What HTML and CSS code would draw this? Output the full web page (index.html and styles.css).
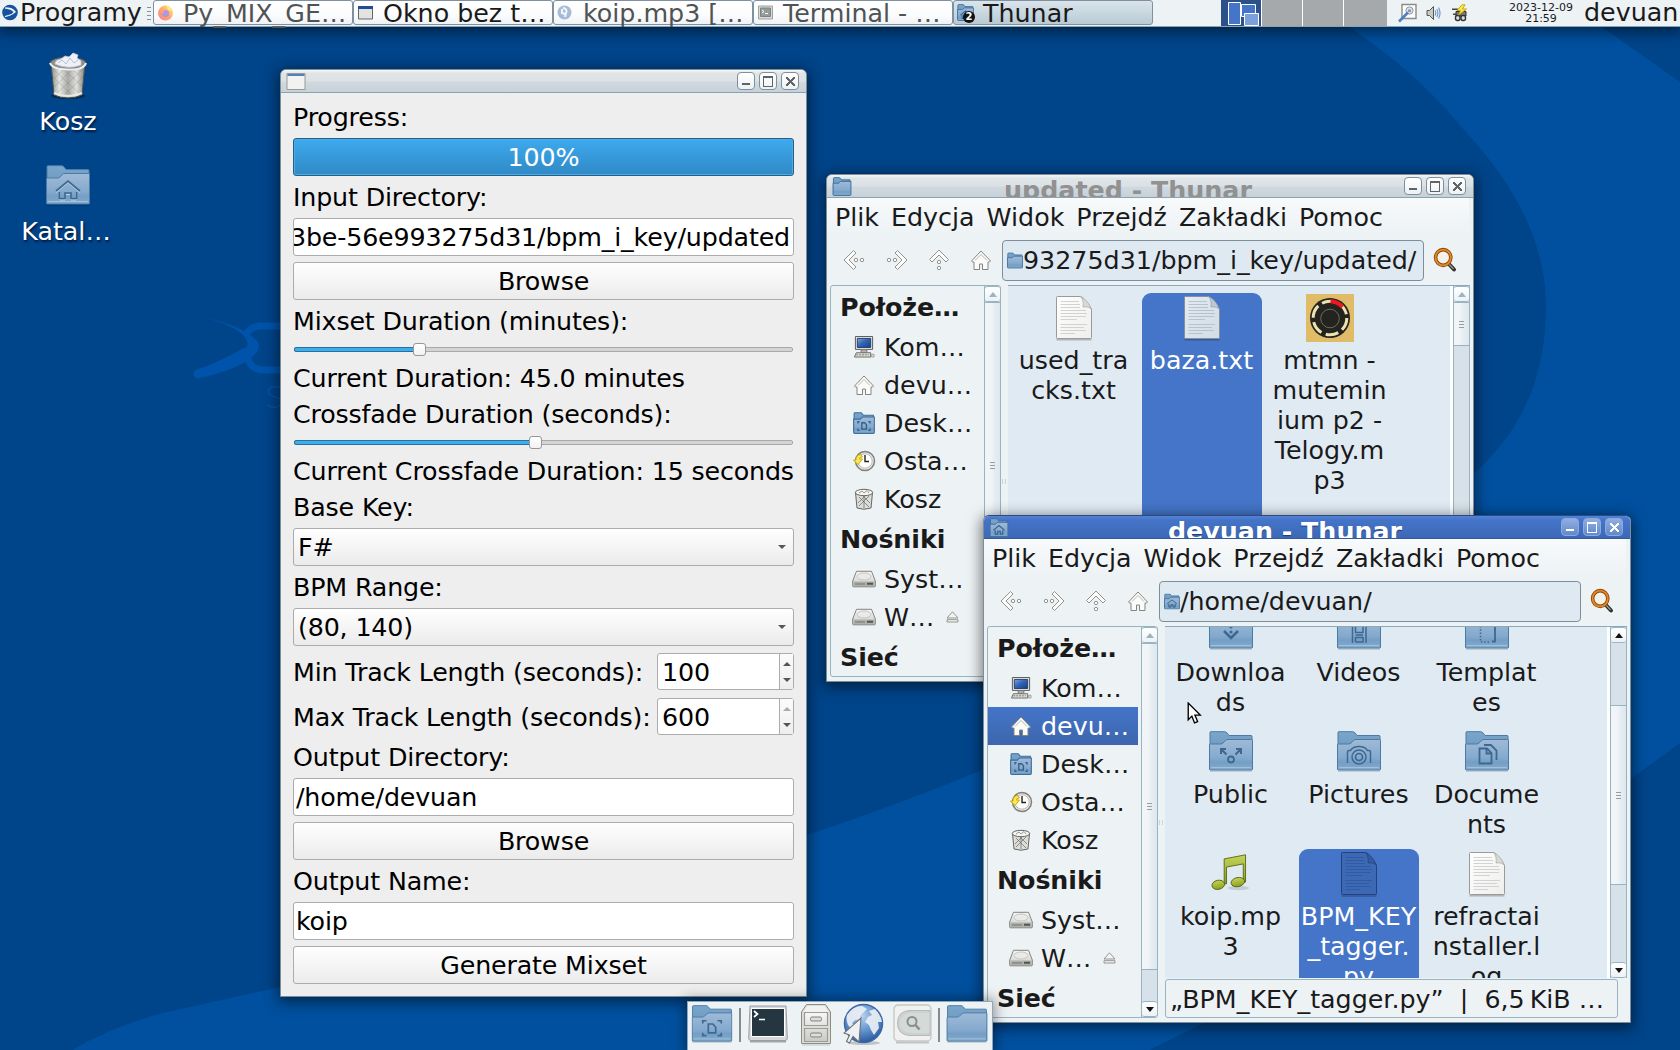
FILE: index.html
```html
<!DOCTYPE html>
<html lang="pl">
<head>
<meta charset="utf-8">
<title>devuan</title>
<link rel="stylesheet" href="styles.css">
</head>
<body>
<svg class="defs" width="0" height="0">
  <defs>
    <linearGradient id="gFront" x1="0" y1="0" x2="0" y2="1"><stop offset="0" stop-color="#a0bad7"/><stop offset=".6" stop-color="#84aace"/><stop offset=".75" stop-color="#759ec5"/><stop offset="1" stop-color="#83acd0"/></linearGradient>
    <linearGradient id="gBack" x1="0" y1="0" x2="0" y2="1"><stop offset="0" stop-color="#7ba6cb"/><stop offset="1" stop-color="#5c8db8"/></linearGradient>
    <linearGradient id="gPaper" x1="0" y1="0" x2="1" y2="1"><stop offset="0" stop-color="#fff"/><stop offset="1" stop-color="#eeeeec"/></linearGradient>
    <linearGradient id="gMetal" x1="0" y1="0" x2="1" y2="0"><stop offset="0" stop-color="#8b8b87"/><stop offset=".25" stop-color="#e6e6e3"/><stop offset=".5" stop-color="#a9aaa6"/><stop offset=".75" stop-color="#e0e0dd"/><stop offset="1" stop-color="#82827e"/></linearGradient>
    <linearGradient id="gGrey" x1="0" y1="0" x2="0" y2="1"><stop offset="0" stop-color="#f8f8f7"/><stop offset="1" stop-color="#c9cac6"/></linearGradient>
    <linearGradient id="gNote" x1="0" y1="0" x2="0" y2="1"><stop offset="0" stop-color="#c5d35c"/><stop offset="1" stop-color="#8aa01f"/></linearGradient>
    <linearGradient id="gScreen" x1="0" y1="0" x2="1" y2="1"><stop offset="0" stop-color="#7fa6e0"/><stop offset=".45" stop-color="#3465b4"/><stop offset="1" stop-color="#163f86"/></linearGradient>
    <radialGradient id="gGlobe" cx=".45" cy=".3" r=".7"><stop offset="0" stop-color="#b9d3f0"/><stop offset=".6" stop-color="#5e8fc9"/><stop offset="1" stop-color="#2d5b9e"/></radialGradient>
    <linearGradient id="gFox" x1="1" y1="0" x2="0" y2="1"><stop offset="0" stop-color="#fff06a"/><stop offset=".5" stop-color="#ffa05a"/><stop offset="1" stop-color="#ff6c8c"/></linearGradient>
  </defs>
  <symbol id="folder" viewBox="0 0 44 41">
    <path d="M1 38V1.500Q1 .7 2 .7H15.500Q17 .7 18 2L20 4.500H42Q43 4.500 43 5.500V38z" fill="url(#gBack)" stroke="#4a7aa5"/>
    <path d="M.5 14Q.5 13 1.500 13H11.500Q13 13 14 12L16.500 9.500Q17.500 8.500 19 8.500H42.500Q43.500 8.500 43.500 9.500V38Q43.500 39 42.500 39H1.500Q.5 39 .5 38z" fill="url(#gFront)" stroke="#4a7aa5"/>
    <path d="M2 36.500H42" stroke="#a9c6e0" stroke-width=".8"/>
    <path d="M1 40.200H43" stroke="#00000030"/>
  </symbol>
  <symbol id="folder-home" viewBox="0 0 44 41"><use href="#folder"/>
    <path d="M10 26.500L22 16.500L34 26.500M14 26.500V34H19V28.500H25V34H30V26.500" fill="none" stroke="#c4d8ea" transform="translate(0 1)"/>
    <path d="M10 26L22 16L34 26M13.500 27V33.500H19V28H25V33.500H30.500V27" fill="none" stroke="#3e6890" stroke-width="1.700"/>
  </symbol>
  <symbol id="folder-small" viewBox="0 0 20 20">
    <path d="M1 18V1.500Q1 .7 1.800 .7H7.500L9.500 3H18.500V18z" fill="url(#gBack)" stroke="#3e6f9c"/>
    <path d="M.6 18.500V6.500H6.500L8.500 4.600H19.400V18.500Q19.400 19.400 18.500 19.400H1.500Q.6 19.400 .6 18.500z" fill="url(#gFront)" stroke="#3e6f9c"/>
  </symbol>
  <symbol id="folder-small-home" viewBox="0 0 20 20"><use href="#folder-small"/>
    <path d="M4 13L10 8L16 13M6 13V17H8.700V14H11.300V17H14V13" fill="none" stroke="#355f88" stroke-width="1.200"/>
  </symbol>
  <symbol id="folder-small-desk" viewBox="0 0 20 20"><use href="#folder-small"/>
    <path d="M4.500 10.500V8.800H6M14 8.800H15.500V10.500M4.500 15V16.700H6M14 16.700H15.500V15M8 9.800H10.500L12.200 11.500V15.500H8z" fill="none" stroke="#355f88" stroke-width="1.200"/>
  </symbol>
  <symbol id="folder-desk" viewBox="0 0 44 41"><use href="#folder"/>
    <path d="M12 20V17H16M28 17H32V20M12 30V33H16M28 33H32V30M18 20.500H23L26 24V30H18z" fill="none" stroke="#3e6890" stroke-width="1.800"/>
  </symbol>
  <symbol id="folder-down" viewBox="0 0 44 41"><use href="#folder"/>
    <path d="M15 22L22 29L29 22" fill="none" stroke="#3e6890" stroke-width="2.600"/><circle cx="22" cy="23" r="1.600" fill="#3e6890"/><circle cx="22" cy="18" r="1.600" fill="#3e6890"/>
  </symbol>
  <symbol id="folder-video" viewBox="0 0 44 41"><use href="#folder"/>
    <path d="M15.500 14V34M29 14V34M18.500 14V23.500H26V14M18.500 33V28.500H26V33H18.500M18.500 26H26" fill="none" stroke="#3e6890" stroke-width="1.500"/>
  </symbol>
  <symbol id="folder-tmpl" viewBox="0 0 44 41"><use href="#folder"/>
    <path d="M27 16H30V32.500H27" fill="none" stroke="#3e6890" stroke-width="1.800"/><path d="M24 33H15.500V14" fill="none" stroke="#3e6890" stroke-width="1.500" stroke-dasharray="1.500 1.800"/>
  </symbol>
  <symbol id="folder-public" viewBox="0 0 44 41"><use href="#folder"/>
    <path d="M17.500 23.500L12.500 18.500M12 23V18H17M26.500 23.500L31.500 18.500M27 18H32V23" fill="none" stroke="#3e6890" stroke-width="2"/><circle cx="22" cy="28.500" r="3" fill="none" stroke="#3e6890" stroke-width="1.800"/>
  </symbol>
  <symbol id="folder-pic" viewBox="0 0 44 41"><use href="#folder"/>
    <path d="M10.500 32V21Q10.500 19.500 12 19.500H13.500Q16 15.500 22 15.500T30.500 19.500H32Q33.500 19.500 33.500 21V32" fill="none" stroke="#3e6890" stroke-width="1.500"/><circle cx="22" cy="26" r="7" fill="none" stroke="#3e6890" stroke-width="1.500"/><circle cx="22" cy="26" r="3.500" fill="none" stroke="#3e6890" stroke-width="1.700"/>
  </symbol>
  <symbol id="folder-doc" viewBox="0 0 44 41"><use href="#folder"/>
    <path d="M14.500 17.500H22L26.500 22V32.500H14.500zM21.500 17.500V22.500H26.500M19 14H26L31.500 19.500V29" fill="none" stroke="#3e6890" stroke-width="1.800"/>
  </symbol>
  <symbol id="doc" viewBox="0 0 38 46">
    <path d="M1.500 44.500H36.500" stroke="#00000038" stroke-width="2"/>
    <path d="M2.500 1.500H25.500Q31 4 36.500 14.500V42.500Q36.500 43.500 35.500 43.500H2.500Q1.500 43.500 1.500 42.500V2.500Q1.500 1.500 2.500 1.500z" fill="url(#gPaper)" stroke="#9a9b97"/>
    <path d="M25.500 1.500Q29 5 28 12Q34 11 36.500 14.500Q33 5 25.500 1.500z" fill="#d9dad6" stroke="#a5a6a2" stroke-width=".7"/>
    <path d="M5.500 6.500H24M5.500 9.500H25M5.500 12.500H25M5.500 15.500H31M5.500 18.500H32M5.500 21.500H31M5.500 24.500H22M5.500 29.500H32M5.500 32.500H29M5.500 35.500H31M5.500 38.500H20" stroke="#d2d2d2"/>
  </symbol>
  <symbol id="house" viewBox="0 0 22 22">
    <path d="M1.500 12L11 2L20.500 12L19.500 13H18V20.500H12.500V15H9.500V20.500H4V13H2.500z" fill="#fbfbfa" stroke="#85857f"/>
    <path d="M5 11.500L11 5.500L17 11.500" fill="none" stroke="#a5a5a0" stroke-width=".8"/>
  </symbol>
  <symbol id="back" viewBox="0 0 22 22">
    <path d="M10.500 1.500L13 4L6 11L13 18L10.500 20.500L1 11z" fill="#fcfcfb" stroke="#93938e"/><circle cx="13" cy="11" r="1.700" fill="#fff" stroke="#93938e"/><circle cx="19" cy="11" r="1.700" fill="#fff" stroke="#93938e"/>
  </symbol>
  <symbol id="computer" viewBox="0 0 22 23">
    <path d="M2 .5H20V14H2z" fill="#e9e9e6" stroke="#55574f"/><path d="M4 2.500H18V12H4z" fill="url(#gScreen)" stroke="#203d70"/><path d="M8 14.500H14V17H8z" fill="#c5c6c2" stroke="#777"/><path d="M3 17.500H18V22H1z" fill="#deded9" stroke="#6b6c67"/><path d="M3 19.700H16" stroke="#777" stroke-dasharray="2 1"/><path d="M19 19H21.500V22H19z" fill="#ddd" stroke="#888" stroke-width=".7"/>
  </symbol>
  <symbol id="recent" viewBox="0 0 22 22">
    <circle cx="12" cy="11" r="9.500" fill="#e8e8e4" stroke="#80817c" stroke-width="1.500"/><circle cx="12" cy="11" r="7.200" fill="#fff" stroke="#aaa" stroke-width=".8"/><path d="M12 5V11.500H16" fill="none" stroke="#222" stroke-width="1.400"/><path d="M8 4.500Q2.500 5 3 10H.5L5 14.500L9.500 9H6.500Q6 7 9.500 7z" fill="#fce94f" stroke="#c4a000" stroke-width=".9"/>
  </symbol>
  <symbol id="bin" viewBox="0 0 22 22">
    <path d="M2.500 4.500H19.500L18 20Q11 22.500 4 20z" fill="#dcddd9" stroke="#666762"/><path d="M6 9L16 19M10 8L17 15M16 8L6 18M12 8L5 15M11 9V20" stroke="#666" stroke-width=".7"/><ellipse cx="11" cy="4.500" rx="8.700" ry="3.200" fill="#f4f4f2" stroke="#666762"/><path d="M6 5L9 3L11 5L14 2.500L16 5" fill="none" stroke="#999"/>
  </symbol>
  <symbol id="drive" viewBox="0 0 24 17">
    <path d="M4.500 .8H19.500L23.300 10.500V15.500Q23.300 16.300 22.500 16.300H1.500Q.7 16.300 .7 15.500V10.500z" fill="url(#gGrey)" stroke="#82837f"/><path d="M1.500 11H22.500V15.500H1.500z" fill="#aeb0ac"/><path d="M3 13.500H13" stroke="#777"/><ellipse cx="12" cy="6" rx="7" ry="3.500" fill="#e9eae8" stroke="#c5c6c3"/><path d="M15 13.300H21" stroke="#555" stroke-width="2"/>
  </symbol>
  <symbol id="eject" viewBox="0 0 13 12"><path d="M6.500 .8L12 7H1zM1 8.700H12V11H1z" fill="#f4f4f2" stroke="#8b8c87" stroke-width=".9"/></symbol>
  <symbol id="search" viewBox="0 0 24 24">
    <path d="M15 15L21 21.500" stroke="#33342f" stroke-width="4" stroke-linecap="round"/><path d="M15.500 15.500L20.500 20.800" stroke="#a0a19c" stroke-width="1.200"/><ellipse cx="10.200" cy="9.500" rx="7.600" ry="7.900" fill="#f3f1ea" stroke="#8f4503" stroke-width="3.600"/><ellipse cx="10.200" cy="9.500" rx="7.600" ry="7.900" fill="none" stroke="#e08a2c" stroke-width="1.800"/>
  </symbol>
  <symbol id="note" viewBox="0 0 44 42">
    <ellipse cx="30" cy="37.500" rx="12" ry="2.500" fill="#00000020"/>
    <path d="M14.500 5.500L38 1V31H35.500V11L17 14.500V33H14.500z" fill="url(#gNote)" stroke="#56680e"/>
    <ellipse cx="8" cy="34" rx="7" ry="5" transform="rotate(-12 8 34)" fill="url(#gNote)" stroke="#56680e"/><ellipse cx="29.500" cy="31" rx="7.500" ry="5" transform="rotate(-12 29.500 31)" fill="url(#gNote)" stroke="#56680e"/>
  </symbol>
</svg>

<svg class="wallpaper" viewBox="0 0 1680 1050">
  <path fill="#00509f" d="M1349 27Q1418 73 1464 130Q1546 218 1546 306Q1546 410 1475 472C1300 620 1150 705 982 770Q900 804 807 835Q560 925 280 987L167 1012Q115 1025 72 1050H1149L1204 1023Q1450 900 1632 778L1680 743V82L1602 27z"/>
  <g fill="none" stroke="#0053aa" stroke-linecap="round" transform="translate(-1 -1)">
    <path d="M199 375Q223 367 247 353" stroke-width="9"/>
    <path fill="#0053aa" stroke="none" d="M192 316Q240 324 256 340Q266 348 250 361Q236 370 206 378L202 370Q238 362 247 350Q254 338 228 326Q214 320 192 316z"/>
    <path d="M249 333Q254 327 262 327H300M249 361Q254 371 264 371H300" stroke-width="7"/>
  </g>
  <text x="265" y="408" class="wallpaper-word">S</text>
</svg>

<div class="desktop-icons">
  <div class="desk-item">
    <svg class="desk-trash" viewBox="0 0 38 48">
      <ellipse cx="19" cy="44" rx="17" ry="3" fill="#00000060"/>
      <path d="M2 11H36L33 43Q19 49 5 43z" fill="url(#gMetal)" stroke="#4f504c"/>
      <path d="M4 17L32 43M4 25L25 45M12 15L34 35M20 15L35 27M34 17L6 43M34 25L13 45M26 15L5 35M18 15L4 27" stroke="#777" stroke-width=".5" opacity=".6"/>
      <ellipse cx="19" cy="11" rx="18" ry="6" fill="#8d8e8a" stroke="#4f504c"/>
      <path d="M6 12Q6 8 12 7L16 4L20 5L24 1L29 3L28 6L32 9L32 13Q19 18 6 12z" fill="#eef0f6" stroke="#c3c8da" stroke-width=".8"/>
      <path d="M9 11L13 8L17 12L21 6L25 11L29 8" stroke="#b9c1da" fill="none"/>
      <path d="M1 11Q3 17 19 17.500T37 11" fill="none" stroke="#eee" stroke-width="2"/>
      <path d="M5 41Q19 47 33 41" fill="none" stroke="#e8e8e6" stroke-width="2"/>
    </svg>
    <span>Kosz</span>
  </div>
  <div class="desk-item">
    <svg class="desk-home"><use href="#folder-home"/></svg>
    <span class="cut">Katal…</span>
  </div>
</div>

<header class="panel">
  <div class="menu-button">
    <svg width="17" height="17" viewBox="0 0 17 17"><circle cx="8" cy="8.500" r="7.800" fill="#16539c"/><path d="M3 4Q10 3 13.500 8Q10 11 3 12.500Q11 11 12 8Q10 5 3 4z" fill="#fff" stroke="#fff" stroke-width=".7"/></svg>
    <span>Programy</span>
  </div>
  <div class="panel-handle"><i></i><i></i><i></i><i></i></div>
  <nav class="tasks">
    <div class="task dim"><svg class="task-icon" viewBox="0 0 17 17"><circle cx="8.500" cy="9" r="7.500" fill="url(#gFox)"/><path d="M9 1Q14 3 15 7L11 6z" fill="#ffe870"/><circle cx="8.500" cy="9.500" r="3.600" fill="#a98be0"/><path d="M2 5Q5 5 8 7Q6 8 6 10" fill="#ff9a5a"/></svg><span>Py_MIX_GE…</span></div>
    <div class="task"><svg class="task-icon" viewBox="0 0 17 17"><path d="M1.500 2.500H15.500V15H1.500z" fill="#e3e4e0" stroke="#666"/><path d="M1 2H16V5H1z" fill="#1d4f97"/></svg><span>Okno bez t…</span></div>
    <div class="task dim"><svg class="task-icon" viewBox="0 0 17 17"><circle cx="7.500" cy="8.500" r="7" fill="#9db4d6"/><path d="M6 4Q11 5 9 9L8 13M5 5V9L8 10" fill="none" stroke="#f3f6fb" stroke-width="2"/></svg><span>koip.mp3 […</span></div>
    <div class="task dim"><svg class="task-icon" viewBox="0 0 17 17"><path d="M1.500 2H15.500V15H1.500z" fill="#d5d7d5" stroke="#999"/><path d="M3.500 4H13.500V12.500H3.500z" fill="#88938f" stroke="#6f7875"/><path d="M5 6L7 7.500L5 9M8 9.500H11" fill="none" stroke="#fff"/></svg><span>Terminal - …</span></div>
    <div class="task active"><span class="group-icon"><svg class="task-icon"><use href="#folder-small-home"/></svg><b>2</b></span><span>Thunar</span></div>
  </nav>
  <div class="pager">
    <svg class="desk-cell current" viewBox="0 0 40 26"><g stroke="#fff"><path d="M7.500 2.500H19.500V24.500H7.500z" fill="#4575c9"/><path d="M20.500 4.500H34.500V16.500H20.500z" fill="#4575c9"/><path d="M23.500 13.500H37.500V25.500H23.500z" fill="#7ca0dc"/></g></svg>
    <span class="desk-cell"></span><span class="desk-cell"></span><span class="desk-cell last"></span>
  </div>
  <div class="tray">
    <svg width="20" height="20" viewBox="0 0 20 20"><path d="M4 1.500H18V15.500H4z" fill="#fdfdfd" stroke="#8b8c88" stroke-width="1.400"/><circle cx="11.500" cy="7.500" r="3.600" fill="#dde3ea" stroke="#8d97a3"/><path d="M1 18.500L10 9.500" stroke="#4f7fc0" stroke-width="2.600"/><path d="M10 6.500H13V9H10z" fill="#8799b0"/></svg>
    <svg width="15" height="16" viewBox="0 0 15 16"><path d="M1 5.500H3.500L7.500 1.500V14.500L3.500 10.500H1z" fill="#c9cac6" stroke="#555751"/><path d="M9 5.500Q10.500 8 9 10.500M10.800 4Q13 8 10.800 12M12.600 2.500Q15.500 8 12.600 13.500" fill="none" stroke="#6d94cc" stroke-width="1.100"/></svg>
    <svg width="16" height="18" viewBox="0 0 16 18"><path d="M0 4.500H6V6H0zM1 9.500H5V11H1z" fill="#444"/><path d="M4 7.500H14V12H4z" fill="#777" stroke="#333"/><rect x="3.500" y="11.500" width="4.500" height="5" rx="2" fill="#ddd" stroke="#333" stroke-width="1.400"/><rect x="9" y="11.500" width="4.500" height="5" rx="2" fill="#ddd" stroke="#333" stroke-width="1.400"/><path d="M10 .8L5 6.500H8.500L6.500 11L14.500 5H10.500L13 .8z" fill="#fce94f" stroke="#c4a000" stroke-width=".9"/></svg>
  </div>
  <div class="clock"><span>2023-12-09</span><span>21:59</span></div>
  <div class="user">devuan</div>
</header>

<section class="window mixer">
  <div class="titlebar">
    <svg class="win-icon" viewBox="0 0 20 17"><path d="M1 .5H19V16.500H1z" fill="#f2f2f0" stroke="#999a96"/><path d="M1.500 1H18.500V3H1.500z" fill="#5680b8"/></svg>
    <span class="win-title"></span>
    <span class="win-buttons"><i class="min"></i><i class="max"></i><i class="close"></i></span>
  </div>
  <form class="form">
    <label>Progress:</label>
    <div class="progress">100%</div>
    <label>Input Directory:</label>
    <div class="field tail"><span>3be-56e993275d31/bpm_i_key/updated</span></div>
    <div class="button">Browse</div>
    <label>Mixset Duration (minutes):</label>
    <div class="slider"><div class="track"><div class="fill" style="width:25.100%"></div></div><div class="knob" style="left:24%"></div></div>
    <label>Current Duration: 45.0 minutes</label>
    <label>Crossfade Duration (seconds):</label>
    <div class="slider"><div class="track"><div class="fill" style="width:48.500%"></div></div><div class="knob" style="left:47.100%"></div></div>
    <label>Current Crossfade Duration: 15 seconds</label>
    <label>Base Key:</label>
    <div class="button combo">F#</div>
    <label>BPM Range:</label>
    <div class="button combo">(80, 140)</div>
    <div class="spin-row"><label>Min Track Length (seconds):</label><div class="spin"><span>100</span><div class="steps"><i class="up"></i><i class="down"></i></div></div></div>
    <div class="spin-row"><label>Max Track Length (seconds):</label><div class="spin"><span>600</span><div class="steps"><i class="up off"></i><i class="down"></i></div></div></div>
    <label>Output Directory:</label>
    <div class="field">/home/devuan</div>
    <div class="button">Browse</div>
    <label>Output Name:</label>
    <div class="field">koip</div>
    <div class="button">Generate Mixset</div>
  </form>
</section>

<section class="window thunar updated">
  <div class="titlebar">
    <svg class="win-icon"><use href="#folder-small"/></svg>
    <span class="win-title">updated - Thunar</span>
    <span class="win-buttons"><i class="min"></i><i class="max"></i><i class="close"></i></span>
  </div>
  <div class="menubar"><span>Plik</span><span>Edycja</span><span>Widok</span><span>Przejdź</span><span>Zakładki</span><span>Pomoc</span></div>
  <div class="toolbar">
    <svg class="tool"><use href="#back"/></svg><svg class="tool fwd"><use href="#back"/></svg><svg class="tool up"><use href="#back"/></svg><svg class="tool"><use href="#house"/></svg>
    <div class="path"><svg class="path-icon"><use href="#folder-small"/></svg><span>93275d31/bpm_i_key/updated/</span></div>
    <svg class="find"><use href="#search"/></svg>
  </div>
  <div class="panes">
    <aside class="side">
      <div class="places">
        <h3>Położe…</h3>
        <div class="place"><svg class="p-icon"><use href="#computer"/></svg>Kom…</div>
        <div class="place"><svg class="p-icon"><use href="#house"/></svg>devu…</div>
        <div class="place"><svg class="p-icon"><use href="#folder-small-desk"/></svg>Desk…</div>
        <div class="place"><svg class="p-icon"><use href="#recent"/></svg>Osta…</div>
        <div class="place"><svg class="p-icon"><use href="#bin"/></svg>Kosz</div>
        <h3>Nośniki</h3>
        <div class="place"><svg class="p-icon"><use href="#drive"/></svg>Syst…</div>
        <div class="place"><svg class="p-icon"><use href="#drive"/></svg>W…<svg class="eject"><use href="#eject"/></svg></div>
        <h3>Sieć</h3>
      </div>
      <div class="scrollbar"><i class="arrow up off"></i><div class="thumb side-thumb"></div><div class="trough"></div><i class="arrow down"></i></div>
    </aside>
    <div class="splitter"></div>
    <main class="content">
      <div class="view">
        <div class="grid">
          <div class="file"><svg class="f-doc"><use href="#doc"/></svg><span>used_tra<br>cks.txt</span></div>
          <div class="file selected tall"><svg class="f-doc tint"><use href="#doc"/></svg><span>baza.txt</span></div>
          <div class="file"><svg class="f-art" viewBox="0 0 48 48"><path d="M0 0H48V48H0z" fill="#e0bb68"/><circle cx="24" cy="24" r="20" fill="#23231f"/><circle cx="24" cy="24" r="16.800" fill="none" stroke="#ebe3b0" stroke-width="3" stroke-dasharray="13 4.600"/><path d="M24.500 7.200A16.800 16.800 0 0 1 36.500 13" fill="none" stroke="#f01820" stroke-width="4"/><circle cx="24" cy="24.500" r="9.300" fill="#23231f" stroke="#77745c" stroke-width=".9"/></svg><span>mtmn -<br>mutemin<br>ium p2 -<br>Telogy.m<br>p3</span></div>
        </div>
        <div class="scrollbar"><i class="arrow up off"></i><div class="thumb short-thumb"></div><div class="trough"></div><i class="arrow down"></i></div>
      </div>
      <div class="status"></div>
    </main>
  </div>
</section>

<section class="window thunar home focused">
  <div class="titlebar">
    <svg class="win-icon"><use href="#folder-small-home"/></svg>
    <span class="win-title">devuan - Thunar</span>
    <span class="win-buttons"><i class="min"></i><i class="max"></i><i class="close"></i></span>
  </div>
  <div class="menubar"><span>Plik</span><span>Edycja</span><span>Widok</span><span>Przejdź</span><span>Zakładki</span><span>Pomoc</span></div>
  <div class="toolbar">
    <svg class="tool"><use href="#back"/></svg><svg class="tool fwd"><use href="#back"/></svg><svg class="tool up"><use href="#back"/></svg><svg class="tool"><use href="#house"/></svg>
    <div class="path"><svg class="path-icon"><use href="#folder-small-home"/></svg><span>/home/devuan/</span></div>
    <svg class="find"><use href="#search"/></svg>
  </div>
  <div class="panes">
    <aside class="side">
      <div class="places">
        <h3>Położe…</h3>
        <div class="place"><svg class="p-icon"><use href="#computer"/></svg>Kom…</div>
        <div class="place selected"><svg class="p-icon"><use href="#house"/></svg>devu…</div>
        <div class="place"><svg class="p-icon"><use href="#folder-small-desk"/></svg>Desk…</div>
        <div class="place"><svg class="p-icon"><use href="#recent"/></svg>Osta…</div>
        <div class="place"><svg class="p-icon"><use href="#bin"/></svg>Kosz</div>
        <h3>Nośniki</h3>
        <div class="place"><svg class="p-icon"><use href="#drive"/></svg>Syst…</div>
        <div class="place"><svg class="p-icon"><use href="#drive"/></svg>W…<svg class="eject"><use href="#eject"/></svg></div>
        <h3>Sieć</h3>
      </div>
      <div class="scrollbar"><i class="arrow up off"></i><div class="thumb side-thumb"></div><div class="trough"></div><i class="arrow down"></i></div>
    </aside>
    <div class="splitter"></div>
    <main class="content">
      <div class="view">
        <div class="grid scrolled">
          <div class="file"><svg class="f-folder"><use href="#folder-down"/></svg><span>Downloa<br>ds</span></div>
          <div class="file"><svg class="f-folder"><use href="#folder-video"/></svg><span>Videos</span></div>
          <div class="file"><svg class="f-folder"><use href="#folder-tmpl"/></svg><span>Templat<br>es</span></div>
          <div class="file"><svg class="f-folder"><use href="#folder-public"/></svg><span>Public</span></div>
          <div class="file"><svg class="f-folder"><use href="#folder-pic"/></svg><span>Pictures</span></div>
          <div class="file"><svg class="f-folder"><use href="#folder-doc"/></svg><span>Docume<br>nts</span></div>
          <div class="file"><svg class="f-note"><use href="#note"/></svg><span>koip.mp<br>3</span></div>
          <div class="file selected"><svg class="f-doc deep" viewBox="0 0 38 46"><path d="M2.500 1.500H25.500Q31 4 36.500 14.500V42.500Q36.500 43.500 35.500 43.500H2.500Q1.500 43.500 1.500 42.500V2.500Q1.500 1.500 2.500 1.500z" fill="#3d68b4" stroke="#23427c"/><path d="M25.500 1.500Q29 5 28 12Q34 11 36.500 14.500Q33 5 25.500 1.500z" fill="#345ba2" stroke="#23427c" stroke-width=".7"/><path d="M5.500 6.500H24M5.500 9.500H25M5.500 12.500H25M5.500 15.500H31M5.500 18.500H32M5.500 21.500H31M5.500 24.500H22M5.500 29.500H32M5.500 32.500H29M5.500 35.500H31M5.500 38.500H20" stroke="#325aa0"/><path d="M1.500 45H36.500" stroke="#00000040" stroke-width="1.500"/></svg><span>BPM_KEY<br>_tagger.<br>py</span></div>
          <div class="file"><svg class="f-doc"><use href="#doc"/></svg><span>refractai<br>nstaller.l<br>og</span></div>
        </div>
        <div class="scrollbar"><i class="arrow up"></i><div class="trough lead"></div><div class="thumb mid-thumb"></div><div class="trough"></div><i class="arrow down"></i></div>
      </div>
      <div class="status">„BPM_KEY_tagger.py”&nbsp; |&nbsp; 6,5&#8239;KiB …</div>
    </main>
  </div>
</section>

<footer class="dock">
  <svg class="d-folder"><use href="#folder-desk"/></svg>
  <i class="dock-sep"></i>
  <svg class="d-term" viewBox="0 0 40 38"><path d="M2 36.500H38" stroke="#00000050" stroke-width="2"/><path d="M2 1H38L39.300 33Q39.300 35.500 37 35.500H3Q.7 35.500 .7 33z" fill="#d6d8da" stroke="#9b9ea1"/><path d="M3.500 3.500H36.500V31.500H3.500z" fill="#263640" stroke="#fff" stroke-width="1"/><path d="M6 6L9.500 9L6 12M11 14.500H17" fill="none" stroke="#fff" stroke-width="1.700"/></svg>
  <svg class="d-cabinet" viewBox="0 0 32 43"><path d="M1.500 9L6.500 1.500H25.500L30.500 9V40.500H1.500z" fill="#dcddd9" stroke="#8c8d88"/><path d="M3 9L7.500 3H24.500L29 9z" fill="#f2f2f0"/><path d="M4.500 9.500H27.500V22.500H4.500zM4.500 25.500H27.500V38.500H4.500z" fill="url(#gGrey)" stroke="#9b9c97" stroke-width="1.200"/><rect x="10.500" y="14" width="11" height="4" rx="1.500" fill="#ddd" stroke="#80817c"/><rect x="10.500" y="30" width="11" height="4" rx="1.500" fill="#ddd" stroke="#80817c"/><path d="M2 42H30" stroke="#00000030"/></svg>
  <svg class="d-globe" viewBox="0 0 42 42"><ellipse cx="21" cy="40" rx="16" ry="2" fill="#00000030"/><circle cx="20.500" cy="20.500" r="19" fill="url(#gGlobe)" stroke="#3c67a8" stroke-width="1.500"/><path d="M4 12Q10 3 19 3L24 6L20 10L17 13L18 16L12 17L9 20L13 24L12 29L8 26Q2 19 4 12zM26 8L32 6Q38 12 39 19L35 19L36 25L31 32L28 27L26 22L22 19L25 14L29 12z" fill="#e9eef4" opacity=".92"/><path d="M18 15L16 39L10 33.500L6.500 40L3.500 38.500L6.500 32L1 30z" fill="#eef0f2" stroke="#6d7278" stroke-width="1.100"/></svg>
  <svg class="d-search" viewBox="0 0 39 40"><path d="M3 38.500H36" stroke="#00000030" stroke-width="2"/><rect x="1" y="1" width="37" height="36" rx="4" fill="#f1f1f0" stroke="#c6c7c4" stroke-width="1.300"/><path d="M37 6.500H17Q4.500 7 4.500 19T17 31.500H37z" fill="#ccd2d1" stroke="#b3b9b8"/><path d="M36.500 9H18Q7 10 7 19T18 29H36.500z" fill="#d3dad8"/><circle cx="19" cy="17.500" r="4.500" fill="none" stroke="#8b8e8c" stroke-width="2"/><path d="M22 20.500L26.500 25.500" stroke="#8b8e8c" stroke-width="2.500"/></svg>
  <i class="dock-sep right"></i>
  <svg class="d-folder"><use href="#folder"/></svg>
</footer>

<svg class="cursor" viewBox="0 0 14 22"><path d="M1 1V17L4.500 13.500L7 20L10 18.700L7.400 12.500H12.500z" fill="#fff" stroke="#000" stroke-width="1.300"/></svg>
</body>
</html>
```
FILE: styles.css
```css
* { box-sizing: border-box; }

body {
  margin: 0;
  width: 1680px;
  height: 1050px;
  overflow: hidden;
  position: relative;
  background: #004489;
  color: #1a1a1a;
  font: 25.33px/30px "DejaVu Sans", sans-serif;
  white-space: nowrap;
}

svg { display: block; flex: none; }
i { font-style: normal; }
.defs { position: absolute; }
.wallpaper { position: absolute; inset: 0; width: 1680px; height: 1050px; }
.wallpaper-word { font: 200 30px "DejaVu Sans", sans-serif; fill: #0053aa; }

/* Desktop icons */
.desktop-icons { position: absolute; left: 8px; top: 52px; width: 120px; display: flex; flex-direction: column; gap: 29px; }
.desk-item { display: flex; flex-direction: column; align-items: center; color: #fff; text-shadow: 1px 2px 2px #001c40; }
.desk-item .cut { margin-right: 4px; }
.desk-trash { width: 38px; height: 48px; margin-bottom: 6px; }
.desk-home { width: 44px; height: 41px; margin-bottom: 10px; }

/* Top panel */
.panel {
  position: absolute; left: 0; top: 0; width: 1680px; height: 27px; z-index: 3;
  display: flex; align-items: flex-start;
  background: #edf2f5; border-bottom: 1px solid #8ca3b2;
  box-shadow: 0 3px 14px 2px rgba(0, 0, 0, .5);
}
.menu-button { width: 147px; display: flex; height: 24px; align-items: center; padding-left: 2px; gap: 1px; }
.panel-handle { width: 6px; padding-top: 7px; display: flex; flex-direction: column; gap: 3px; }
.panel-handle i { width: 4px; height: 1px; background: #8a9095; }
.tasks { display: flex; width: 1000px; }
.task {
  width: 200px; height: 25px; padding-left: 3px; display: flex; align-items: center; gap: 9px;
  border: 1px solid #7f90a0; border-radius: 3px; background: linear-gradient(#fff, #fbfcfd 60%, #eff3f6);
  line-height: 24px;
}
.task-icon { width: 17px; height: 17px; }
.task.dim { color: #505355; }
.task.dim .task-icon { opacity: .9; }
.task.active { background: linear-gradient(#dae4ea, #c9d8e0 50%, #b8cad4); }
.group-icon { position: relative; }
.group-icon b { position: absolute; left: 6px; top: 7px; width: 12px; height: 12px; border-radius: 6px; background: #111; color: #fff; font-size: 10px; line-height: 12px; text-align: center; }
.pager { margin-left: 68px; display: flex; gap: 1px; background: #fff; }
.desk-cell { width: 40px; height: 26px; background: #a5a9ac; }
.desk-cell.current { background: #2c5189; }
.desk-cell.last { width: 43px; }
.tray { display: flex; align-items: center; height: 26px; margin-left: 11px; gap: 8px; }
.tray svg:last-child { margin-left: 3px; }
.clock { margin-left: 41px; width: 64px; display: flex; flex-direction: column; align-items: center; font-size: 11px; line-height: 11px; padding-top: 2px; }
.user { margin-left: 11px; line-height: 24px; }

/* Window frames */
.window {
  position: absolute; display: flex; flex-direction: column;
  background: #edf2f5; border: 1px solid #7e8d97; border-radius: 6px 6px 0 0;
  box-shadow: 0 3px 14px 2px rgba(0, 0, 0, .5);
}
.titlebar {
  height: 23px; flex: none; display: flex; align-items: center; padding: 0 7px 0 5px;
  border-bottom: 1px solid #8ba3b0; border-radius: 5px 5px 0 0;
  background: linear-gradient(#f4f7f8, #dfe5e7 15%, #dbe1e5 50%, #d1d9e0 55%, #c9d1d8);
}
.win-icon { width: 20px; height: 19px; }
.win-title { flex: 1; height: 22px; overflow: hidden; text-align: center; font-weight: bold; line-height: 30px; color: #919191; }
.win-buttons { display: flex; gap: 4px; }
.win-buttons i {
  width: 18px; height: 18px; border: 1px solid #7d90a0; border-radius: 4px;
  background: linear-gradient(#fff, #eef2f4); display: flex; align-items: center; justify-content: center; color: #606467;
}
.win-buttons .min::before { content: ""; width: 8px; height: 2px; margin-top: 6px; background: currentColor; }
.win-buttons .max::before { content: ""; width: 8px; height: 8px; border: 1px solid currentColor; border-top-width: 2px; }
.win-buttons .close::before { content: ""; width: 9px; height: 9px; background: linear-gradient(to top right, transparent 41%, currentColor 41%, currentColor 59%, transparent 59%), linear-gradient(to bottom right, transparent 41%, currentColor 41%, currentColor 59%, transparent 59%); }
.focused { border-color: #2c4a80 #7e8d97 #7e8d97; }
.focused .titlebar { background: linear-gradient(#5482d4, #4474c8 20%, #3d68b7); border-bottom-color: #34599c; }
.focused .win-title { color: #fff; text-shadow: 0 1px 1px #1d3a70; }
.focused .win-buttons i { color: #fff; border-color: #8aa9df; background: linear-gradient(#90aee0, #6389cc); }

/* Mix generator form */
.mixer { left: 280px; top: 69px; width: 527px; height: 928px; color: #000; background: #eee; letter-spacing: -.165px; }
.mixer .win-icon { height: 17px; }
.form { display: flex; flex-direction: column; gap: 6px; padding: 9px 12px 0; height: 903px; }
.form > label, .spin-row label { height: 30px; flex: none; }
.progress {
  height: 38px; line-height: 37px; text-align: center; color: #fff;
  border: 1px solid #215f8c; border-radius: 3px; background: linear-gradient(#3daaee, #3089c6);
  box-shadow: inset 0 0 0 1px #51aae0;
}
.field, .button { height: 38px; line-height: 36px; border: 1px solid #acacac; border-radius: 3px; }
.field { background: #fff; padding-left: 2px; overflow: hidden; }
.field.tail { display: flex; justify-content: flex-end; padding: 0 3px 0 0; }
.button { text-align: center; background: linear-gradient(#fefefe, #f5f5f5 50%, #ebebeb); }
.combo { text-align: left; padding: 0 7px 0 4px; display: flex; justify-content: space-between; align-items: center; }
.combo::after { content: ""; border: 4px solid transparent; border-top-color: #555; border-bottom: 0; }
.slider { height: 15px; position: relative; display: flex; align-items: center; padding: 0 1px; }
.track { flex: 1; height: 5px; border: 1px solid #a9a9a9; border-radius: 2px; background: #d4d4d4; }
.fill { height: 5px; margin: -1px; background: #3daee9; border: 1px solid #2770a3; border-radius: 2px; }
.knob { position: absolute; top: 1px; width: 13px; height: 13px; border: 1px solid #979797; border-radius: 3px; background: linear-gradient(#fff, #f2f2f2); }
.spin-row { height: 39px; display: flex; justify-content: space-between; align-items: center; }
.spin { width: 137px; height: 37px; line-height: 36px; border: 1px solid #acacac; border-radius: 3px; background: #fff; display: flex; justify-content: space-between; padding-left: 4px; }
.steps { width: 14px; border-left: 1px solid #acacac; background: linear-gradient(#fbfbfb, #eee); display: flex; flex-direction: column; align-items: center; gap: 12px; padding-top: 8px; }
.steps i { border: 4px solid transparent; }
.steps .up { border-bottom: 4px solid #555; border-top: 0; }
.steps .up.off { border-bottom-color: #aaa; }
.steps .down { border-top: 4px solid #555; border-bottom: 0; }

/* File manager */
.thunar { width: 648px; height: 508px; }
.updated { left: 826px; top: 174px; z-index: 1; }
.home { left: 983px; top: 515px; z-index: 2; }
.menubar { height: 37px; flex: none; display: flex; gap: 12px; align-items: center; padding: 1px 0 0 8px; background: linear-gradient(#f8fafb, #edf2f5); margin: 0 4px 0 0; }
.toolbar { height: 50px; flex: none; display: flex; align-items: center; padding-left: 16px; }
.tool { width: 22px; height: 22px; margin-right: 21px; }
.tool + .tool { margin-right: 20px; }
.fwd { transform: scaleX(-1); }
.up.tool { transform: rotate(90deg); }
.path { width: 422px; height: 41px; margin-left: -10px; border: 1px solid #7e8d9b; border-radius: 4px; background: #dfe9f2; display: flex; align-items: center; padding-left: 4px; overflow: hidden; }
.path-icon { width: 16px; height: 17px; }
.find { width: 24px; height: 26px; margin-left: 9px; }
.panes { flex: 1; display: flex; padding: 0 3px 4px; min-height: 0; }
.side { width: 171px; border: 1px solid #98b3c1; border-radius: 3px; display: flex; overflow: hidden; background: #edf2f5; }
.places { width: 153px; flex: none; }
.places h3 { margin: 0; height: 42px; font-size: inherit; line-height: 42px; padding-left: 9px; letter-spacing: -.1px; }
.place { height: 38px; width: 150px; display: flex; align-items: center; gap: 8px; padding-left: 21px; }
.place.selected { color: #fff; background: linear-gradient(#4575c9, #3c66ad); }
.p-icon { width: 24px; height: 22px; }
.eject { width: 13px; height: 12px; margin-left: 4px; }
.splitter { width: 7px; background: linear-gradient(90deg, #cdd4d8 1px, transparent 1px 3px, #cdd4d8 3px 4px, transparent 4px) 1px 50% / 4px 5px no-repeat; }
.scrollbar { width: 17px; flex: none; display: flex; flex-direction: column; border: solid #98b3c1; border-width: 0 1px; background: #d6e1e9; }
.side .scrollbar { width: 16px; border-right: 0; }
.arrow { height: 16px; flex: none; background: linear-gradient(#fff, #eef2f5); border: solid #98b3c1; border-width: 1px 0; border-radius: 3px; display: flex; align-items: center; justify-content: center; }
.arrow::before { content: ""; border: 4px solid transparent; border-bottom: 5px solid #111; border-top: 0; }
.arrow.off::before { border-bottom-color: #9bb4c2; }
.arrow.down::before { transform: rotate(180deg); }
.thumb { border-bottom: 1px solid #98b3c1; border-top: 1px solid #98b3c1; background: linear-gradient(90deg, #f2f5f7 35%, #e6edf2 65%, #dde7ee); display: flex; align-items: center; justify-content: center; }
.thumb::before { content: ""; width: 5px; height: 7px; background: repeating-linear-gradient(#969ea3 0 1px, transparent 1px 3px); }
.trough { flex: 1; }
.trough.lead { flex: none; height: 62px; }
.side-thumb { height: 327px; }
.short-thumb { height: 44px; }
.mid-thumb { height: 180px; }
.content { flex: 1; display: flex; flex-direction: column; min-width: 0; }
.view { height: 353px; display: flex; border-top: 1px solid #8aa9bb; overflow: hidden; background: #fff; }
.grid { flex: 1; margin-right: 3px; background: #e0eaf3; padding: 7px 0 0 6px; display: grid; grid-template-columns: repeat(3, 120px); grid-auto-rows: 122px; column-gap: 8px; }
.grid.scrolled { padding-top: 0; margin-top: -22px; }
.file { display: flex; flex-direction: column; align-items: center; text-align: center; line-height: 30px; }
.file.selected { background: #4475c8; color: #fff; border-radius: 9px; height: 142px; }
.file.tall { height: 340px; }
.file span { margin-right: 1px; }
.f-doc { width: 38px; height: 46px; margin: 2px 0 4px; }
.tint { filter: brightness(.88) sepia(.2) hue-rotate(165deg); }
.f-folder { width: 44px; height: 41px; margin: 4px 0 7px; }
.f-note { width: 40px; height: 42px; margin: 3px 0 7px; }
.f-art { width: 48px; height: 48px; margin: 1px 0 3px; }
.status { width: 453px; height: 39px; margin-top: 1px; line-height: 38px; padding-left: 4px; border: 1px solid #98b3c1; border-radius: 3px; }

/* Launcher dock */
.dock {
  position: absolute; left: 687px; top: 1001px; width: 306px; height: 50px; z-index: 4;
  display: flex; align-items: center; padding: 0 0 5px 3px;
  background: #edf2f5; border: 1px solid #8fa7b8; border-bottom: 0; box-shadow: 0 0 12px 2px rgba(0, 0, 0, .4);
}
.dock-sep { width: 2px; height: 34px; margin: 1px 7px 0 6px; background: #858b8f; }
.dock-sep.right { margin-right: 6px; }
.d-folder { width: 42px; height: 38px; }
.d-term { width: 40px; height: 38px; margin-right: 12px; }
.d-cabinet { width: 32px; height: 43px; margin-right: 11px; }
.d-globe { width: 42px; height: 42px; margin-right: 8px; }
.d-search { width: 39px; height: 40px; }
.cursor { position: absolute; left: 1187px; top: 702px; width: 15px; height: 23px; z-index: 5; }
```
